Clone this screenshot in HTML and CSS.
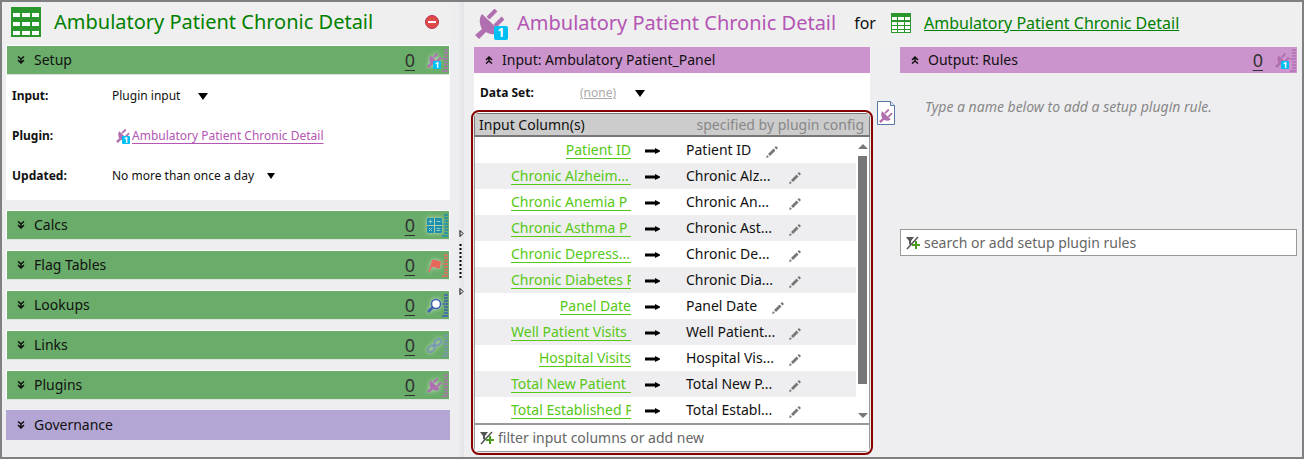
FILE: index.html
```html
<!doctype html>
<html lang="en">
<head>
<meta charset="utf-8">
<title>Ambulatory Patient Chronic Detail</title>
<link rel="stylesheet" href="styles.css">
</head>
<body>
<svg class="defs" aria-hidden="true">
    <symbol id="i-table" viewBox="0 0 30 30">
        <path fill="#2b962b" d="M0 0h30v30H0z"/>
        <path fill="#fff" d="M2 6h7v4H2zM11 6h8v4h-8zM21 6h7v4h-7zM2 15h7v4H2zM11 15h8v4h-8zM21 15h7v4h-7zM2 24h7v4H2zM11 24h8v4h-8zM21 24h7v4h-7z"/>
    </symbol>
    <symbol id="i-table-sm" viewBox="0 0 20 20">
        <path fill="#2b962b" d="M0 0h20v20H0z"/>
        <path fill="#fff" d="M1 4h5v3H1zM7 4h6v3H7zM14 4h5v3h-5zM1 9h5v3H1zM7 9h6v3H7zM14 9h5v3h-5zM1 13h5v3H1zM7 13h6v3H7zM14 13h5v3h-5zM1 17h5v2H1zM7 17h6v2H7zM14 17h5v2h-5z"/>
    </symbol>
    <symbol id="i-plug" viewBox="0 0 30 30">
        <path fill="#b070b0" d="M7 5 25 22C22 26 15 26 11 23L4 30 0 26 7 20C4 15 4 9 7 5z"/>
        <path stroke="#b070b0" stroke-width="4" d="M13 9 21 1M20 17l8-8"/>
    </symbol>
    <symbol id="i-ruler" viewBox="0 0 6 23">
        <path stroke="currentColor" stroke-width="1.500" d="M2 1h4M2 4h4M2 7h4M0 10h6M2 13h4M2 16h4M2 19h4M0 22h6"/>
    </symbol>
    <symbol id="i-down" viewBox="0 0 8 8">
        <path fill="none" stroke="#111" stroke-width="1.500" d="M1 .5 4 3 7 .5M1 4l3 3 3-3M4 2v4"/>
    </symbol>
    <symbol id="i-up" viewBox="0 0 8 8">
        <path fill="none" stroke="#111" stroke-width="1.500" d="M1 7.500 4 5 7 7.500M1 4l3-3 3 3M4 2v4"/>
    </symbol>
    <symbol id="i-arrow" viewBox="0 0 15 7">
        <path d="M0 2.500h10V1l5 2.500v1L10 7V5.500H0z"/>
    </symbol>
    <symbol id="i-pencil" viewBox="0 0 12 12">
        <path fill="#777" d="M0 12 1 9l2 2zM2 8l5.500-5.500 2 2L4 10zM8.500 1.500 10 0l2 2-1.500 1.500z"/>
    </symbol>
    <symbol id="i-filter" viewBox="0 0 14 14">
        <path fill="#555" d="M0 1h8L5 5v4L3 8V5z"/>
        <path stroke="#555" stroke-width="1.500" d="M1 13 12 1"/>
        <path stroke="#4a9e1e" stroke-width="2" d="M10 5v8M6 9h8"/>
    </symbol>
</svg>
<div class="app">
    <aside class="side">
        <header class="side-head">
            <svg class="icon-lg"><use href="#i-table"/></svg>
            <h1>Ambulatory Patient Chronic Detail</h1>
            <button class="remove" aria-label="Remove">
                <svg viewBox="0 0 14 14"><circle cx="7" cy="7" r="6.500" fill="#e04a4a" stroke="#b8304a"/><path fill="#fff" d="M3 6h8v2H3z"/></svg>
            </button>
        </header>
        <div class="sections">
            <section class="setup">
                <div class="bar">
                    <svg class="chev"><use href="#i-down"/></svg>
                    <h2>Setup</h2>
                    <a class="count" href="#">0</a>
                    <span class="kind"><svg class="plug"><use href="#i-plug"/></svg><b class="badge">1</b><svg class="ruler violet"><use href="#i-ruler"/></svg></span>
                </div>
                <dl class="props">
                    <dt>Input:</dt>
                    <dd><button class="drop wide">Plugin input<i></i></button></dd>
                    <dt>Plugin:</dt>
                    <dd class="plugin"><span class="tag"><svg class="plug"><use href="#i-plug"/></svg><b class="badge">1</b></span><a href="#">Ambulatory Patient Chronic Detail</a></dd>
                    <dt>Updated:</dt>
                    <dd><button class="drop small">No more than once a day<i></i></button></dd>
                </dl>
            </section>
            <div class="bar">
                <svg class="chev"><use href="#i-down"/></svg>
                <h2>Calcs</h2>
                <a class="count" href="#">0</a>
                <span class="kind"><svg class="glyph" viewBox="0 0 15 15"><path fill="#1d8fae" d="M1 0h6v7H0V1zM8 0h6l1 1v6H8zM0 8h7v7H1l-1-1zM8 8h7v6l-1 1H8z"/><path stroke="#8fd0c0" d="M3.500 1.500v4M1.500 3.500h4M9.500 3.500h4M2 10l3 3M5 10l-3 3M9.500 10.500h4M9.500 12.500h4"/></svg><svg class="ruler teal"><use href="#i-ruler"/></svg></span>
            </div>
            <div class="bar">
                <svg class="chev"><use href="#i-down"/></svg>
                <h2>Flag Tables</h2>
                <a class="count" href="#">0</a>
                <span class="kind"><svg class="glyph" viewBox="0 0 15 15"><path fill="#e8695c" d="M5 3c3-3 5 1 9 0l-1 7c-4 2-5-3-9 0z"/><path stroke="#e8695c" stroke-width="1.500" d="M6 2 2 14"/></svg><svg class="ruler red"><use href="#i-ruler"/></svg></span>
            </div>
            <div class="bar">
                <svg class="chev"><use href="#i-down"/></svg>
                <h2>Lookups</h2>
                <a class="count" href="#">0</a>
                <span class="kind"><svg class="glyph" viewBox="0 0 15 15"><path stroke="#3f62b4" stroke-width="2.500" d="M6 9l-5 5"/><circle cx="9" cy="6" r="4.500" fill="#fff" stroke="#3f62b4" stroke-width="1.500"/></svg><svg class="ruler blue"><use href="#i-ruler"/></svg></span>
            </div>
            <div class="bar">
                <svg class="chev"><use href="#i-down"/></svg>
                <h2>Links</h2>
                <a class="count" href="#">0</a>
                <span class="kind"><svg class="glyph" viewBox="0 0 15 15"><g fill="none" stroke="#7795b5" stroke-width="1.500" transform="rotate(-45 7.500 7.500)"><rect x="-1" y="5" width="8" height="5" rx="2.500"/><rect x="8" y="5" width="8" height="5" rx="2.500"/><path d="M5 7.500h5"/></g></svg><svg class="ruler steel"><use href="#i-ruler"/></svg></span>
            </div>
            <div class="bar">
                <svg class="chev"><use href="#i-down"/></svg>
                <h2>Plugins</h2>
                <a class="count" href="#">0</a>
                <span class="kind"><svg class="plug"><use href="#i-plug"/></svg><svg class="ruler violet"><use href="#i-ruler"/></svg></span>
            </div>
            <div class="bar governance">
                <svg class="chev"><use href="#i-down"/></svg>
                <h2>Governance</h2>
            </div>
        </div>
    </aside>

    <div class="splitter">
        <svg viewBox="0 0 5 66"><path fill="#fff" stroke="#000" d="M1 .5 4 3.500 1 6.500zM1 58.500l3 3-3 3z"/><path stroke="#000" stroke-width="2" stroke-dasharray="2" d="M1.500 14v36"/></svg>
    </div>

    <main class="main">
        <header class="main-head">
            <span class="logo"><svg class="plug"><use href="#i-plug"/></svg><b class="badge">1</b></span>
            <h1>Ambulatory Patient Chronic Detail</h1>
            <span class="for">for</span>
            <svg class="icon-md"><use href="#i-table-sm"/></svg>
            <a href="#">Ambulatory Patient Chronic Detail</a>
        </header>
        <div class="cols">
            <section class="input">
                <div class="bar pink">
                    <svg class="chev"><use href="#i-up"/></svg>
                    <h2>Input: Ambulatory Patient_Panel</h2>
                </div>
                <div class="dataset">
                    <b>Data Set:</b>
                    <a href="#">(none)</a>
                    <button class="drop" aria-label="Choose data set"><i></i></button>
                </div>
                <div class="columns">
                    <div class="columns-head"><h3>Input Column(s)</h3><span>specified by plugin config</span></div>
                    <div class="list">
                        <table>
                            <tr><td><a href="#">Patient ID</a></td><td><svg class="arrow"><use href="#i-arrow"/></svg></td><td><span>Patient ID</span><svg class="pencil"><use href="#i-pencil"/></svg></td></tr>
                            <tr class="long"><td><a href="#">Chronic Alzheim...</a></td><td><svg class="arrow"><use href="#i-arrow"/></svg></td><td><span>Chronic Alz...</span><svg class="pencil"><use href="#i-pencil"/></svg></td></tr>
                            <tr class="long"><td><a href="#">Chronic Anemia P</a></td><td><svg class="arrow"><use href="#i-arrow"/></svg></td><td><span>Chronic An...</span><svg class="pencil"><use href="#i-pencil"/></svg></td></tr>
                            <tr class="long"><td><a href="#">Chronic Asthma P</a></td><td><svg class="arrow"><use href="#i-arrow"/></svg></td><td><span>Chronic Ast...</span><svg class="pencil"><use href="#i-pencil"/></svg></td></tr>
                            <tr class="long"><td><a href="#">Chronic Depress...</a></td><td><svg class="arrow"><use href="#i-arrow"/></svg></td><td><span>Chronic De...</span><svg class="pencil"><use href="#i-pencil"/></svg></td></tr>
                            <tr class="long"><td><a href="#">Chronic Diabetes P</a></td><td><svg class="arrow"><use href="#i-arrow"/></svg></td><td><span>Chronic Dia...</span><svg class="pencil"><use href="#i-pencil"/></svg></td></tr>
                            <tr><td><a href="#">Panel Date</a></td><td><svg class="arrow"><use href="#i-arrow"/></svg></td><td><span>Panel Date</span><svg class="pencil"><use href="#i-pencil"/></svg></td></tr>
                            <tr class="long"><td><a href="#">Well Patient Visits</a></td><td><svg class="arrow"><use href="#i-arrow"/></svg></td><td><span>Well Patient...</span><svg class="pencil"><use href="#i-pencil"/></svg></td></tr>
                            <tr class="mid"><td><a href="#">Hospital Visits</a></td><td><svg class="arrow"><use href="#i-arrow"/></svg></td><td><span>Hospital Vis...</span><svg class="pencil"><use href="#i-pencil"/></svg></td></tr>
                            <tr class="long"><td><a href="#">Total New Patient</a></td><td><svg class="arrow"><use href="#i-arrow"/></svg></td><td><span>Total New P...</span><svg class="pencil"><use href="#i-pencil"/></svg></td></tr>
                            <tr class="long"><td><a href="#">Total Established P</a></td><td><svg class="arrow"><use href="#i-arrow"/></svg></td><td><span>Total Establ...</span><svg class="pencil"><use href="#i-pencil"/></svg></td></tr>
                        </table>
                        <div class="scroll"><i class="up"></i><span></span><i></i></div>
                    </div>
                    <label class="search"><svg><use href="#i-filter"/></svg><input type="text" aria-label="Filter input columns" placeholder="filter input columns or add new"></label>
                </div>
            </section>
            <div class="rail">
                <svg viewBox="0 0 18 24"><path fill="#fff" stroke="#5577aa" d="M.5.5h13l4 4v19H.5z"/><path fill="#dde6f5" stroke="#5577aa" d="M13.500.5v4h4"/><use href="#i-plug" x="2" y="8" width="14" height="14"/></svg>
            </div>
            <section class="output">
                <div class="bar pink">
                    <svg class="chev"><use href="#i-up"/></svg>
                    <h2>Output: Rules</h2>
                    <a class="count" href="#">0</a>
                    <span class="kind"><svg class="plug"><use href="#i-plug"/></svg><b class="badge">1</b><svg class="ruler violet"><use href="#i-ruler"/></svg></span>
                </div>
                <p class="hint">Type a name below to add a setup plugin rule.</p>
                <label class="search"><svg><use href="#i-filter"/></svg><input type="text" aria-label="Search setup plugin rules" placeholder="search or add setup plugin rules"></label>
            </section>
        </div>
    </main>
</div>
</body>
</html>
```
FILE: styles.css
```css
* {
    box-sizing: border-box;
}
body {
    margin: 0;
    font: 14px/20px "Noto Sans", "Open Sans", sans-serif;
    color: #111;
}
h1, h2, h3, p, dl, dd {
    margin: 0;
    font-weight: normal;
}
button {
    border: 0;
    padding: 0;
    background: none;
    font: inherit;
    color: inherit;
}
svg {
    display: block;
    flex: none;
}
.defs {
    position: absolute;
    width: 0;
    height: 0;
}
.app {
    display: flex;
    min-height: 100vh;
    border: 2px solid #808080;
    background: #eeeef0;
}

/* headers */
.side-head, .main-head {
    display: flex;
    align-items: center;
    background: #efefef;
}
.side-head {
    height: 43px;
    padding: 0 13px 4px 9px;
}
.side-head h1 {
    flex: 1;
    margin-left: 13px;
    font-size: 20px;
    line-height: 30px;
    color: #008000;
}
.icon-lg {
    width: 30px;
    height: 30px;
}
.icon-md {
    width: 20px;
    height: 20px;
    margin: 0 13px 0 15px;
}
.remove svg {
    width: 14px;
    height: 14px;
}
.main-head {
    height: 45px;
    padding: 0 10px 4px 11px;
}
.main-head h1 {
    margin: 0 18px 0 9px;
    font-size: 20px;
    line-height: 30px;
    color: #b455b4;
}
.main-head a {
    font-size: 16px;
    color: #008000;
}
.for {
    font-size: 16px;
}
.logo {
    position: relative;
    width: 33px;
    height: 31px;
    margin-top: 4px;
}
.logo .plug {
    width: 30px;
    height: 30px;
}
.badge {
    position: absolute;
    background: #00bff3;
    border-radius: 2px;
    color: #fff;
    text-align: center;
}
.logo .badge {
    right: 0;
    bottom: 0;
    width: 14px;
    height: 14px;
    font-size: 12px;
    line-height: 14px;
}

/* left side */
.side {
    flex: 0 1 450px;
}
.sections {
    padding: 0 2px 0 4px;
}
.bar {
    display: flex;
    align-items: center;
    height: 30px;
    border: 1px solid #fff;
    border-bottom-color: #dfe3df;
    background: #6aad6a;
    margin-bottom: 10px;
    padding-left: 10px;
}
.bar h2 {
    flex: 1;
    margin-left: 9px;
    font-size: 14px;
    line-height: 20px;
}
.chev {
    width: 8px;
    height: 8px;
}
.count {
    font-size: 18px;
    text-underline-offset: 3px;
    color: #333;
}
.setup {
    background: #fff;
    margin-bottom: 10px;
}
.setup .bar {
    margin: 0;
}
.governance {
    border: 0;
    padding-left: 11px;
    background: #b3a6d5;
}
.kind {
    display: flex;
    align-items: center;
    position: relative;
    width: 21px;
    margin: 0 1px 0 12px;
}
.kind .plug, .glyph {
    width: 15px;
    height: 15px;
    filter: drop-shadow(0 0 2px #cde0cd);
}
.kind .badge, .tag .badge {
    width: 8px;
    height: 8px;
    font-size: 8px;
    line-height: 8px;
    border-radius: 1px;
}
.kind .badge {
    left: 6px;
    bottom: 3px;
}
.ruler {
    width: 6px;
    height: 23px;
}
.violet { color: #b070b0; }
.teal { color: #1d8fae; }
.red { color: #e8695c; }
.blue { color: #3f62b4; }
.steel { color: #7795b5; }

.props {
    display: grid;
    grid-template-columns: 100px 1fr;
    grid-auto-rows: 40px;
    align-items: center;
    height: 125px;
    padding: 1px 0 0 6px;
    font-size: 12px;
}
.props dt {
    font-weight: bold;
}
.drop {
    display: flex;
    align-items: center;
}
.drop i {
    border: 5px solid transparent;
    border-top: 7px solid #000;
    border-bottom: 0;
}
.wide i {
    margin-left: 18px;
}
.small i {
    margin-left: 13px;
    border-width: 6px 4px 0;
}
.plugin {
    display: flex;
    align-items: center;
    padding-left: 4px;
}
.plugin a {
    color: #b455b4;
    text-underline-offset: 3px;
}
.tag {
    position: relative;
    width: 16px;
    height: 15px;
}
.tag .plug {
    width: 14px;
    height: 14px;
}
.tag .badge {
    right: 2px;
    bottom: 0;
}

.splitter {
    flex: none;
    width: 12px;
    padding: 228px 0 0 7px;
    background: linear-gradient(to right, #eeeef0 5px, #e4e4e8);
}
.splitter svg {
    width: 5px;
    height: 66px;
}

/* right side */
.main {
    flex: 1;
    min-width: 0;
}
.cols {
    display: grid;
    grid-template-columns: 396px 30px 1fr;
    padding: 0 5px 4px 10px;
}
.pink {
    height: 26px;
    margin: 0;
    border: 0;
    padding-left: 11px;
    background: #cc94cd;
}
.pink .plug {
    filter: none;
}
.dataset {
    display: flex;
    align-items: center;
    height: 40px;
    padding-left: 6px;
    background: #fff;
}
.dataset b {
    width: 100px;
    font-size: 12px;
}
.dataset a {
    width: 55px;
    font-size: 12px;
    color: #aaa;
}
.columns {
    border-radius: 5px;
    outline: 2px solid #870000;
    outline-offset: 1px;
    overflow: hidden;
    background: #fff;
}
.columns-head {
    display: flex;
    justify-content: space-between;
    height: 24px;
    border: 1px solid #777;
    border-bottom-width: 2px;
    padding: 0 5px 0 4px;
    line-height: 22px;
    background: #ccc;
}
.columns-head h3 {
    font-size: 14px;
}
.columns-head span {
    color: #888;
}
.list {
    display: flex;
    border: 1px solid #999;
    border-width: 0 1px;
}
table {
    flex: 1;
    table-layout: fixed;
    border-collapse: collapse;
}
tr:nth-child(even) {
    background: #eeeef0;
}
td {
    height: 26px;
    padding: 0;
    white-space: nowrap;
}
td:first-child {
    width: 156px;
    padding-left: 36px;
}
td:first-child a {
    display: block;
    width: max-content;
    max-width: 120px;
    height: 18px;
    margin-left: auto;
    border-bottom: 1px solid #55c814;
    overflow: hidden;
    line-height: 18px;
    text-decoration: none;
    color: #55c814;
}
.long td:first-child a {
    width: 120px;
}
td:nth-child(2) {
    width: 55px;
    padding-left: 14px;
}
td span {
    display: inline-block;
}
.long span, .mid span {
    width: 88px;
}
.arrow {
    width: 15px;
    height: 7px;
}
.pencil {
    display: inline-block;
    width: 12px;
    height: 12px;
    margin-left: 15px;
    vertical-align: -3px;
}
.scroll {
    display: flex;
    flex-direction: column;
    align-items: center;
    gap: 7px;
    width: 13px;
    padding: 7px 0 5px;
}
.scroll i {
    border: 5px solid transparent;
    border-top-color: #777;
    border-bottom: 0;
}
.scroll .up {
    border-top: 0;
    border-bottom: 5px solid #777;
}
.scroll span {
    width: 9px;
    height: 228px;
    margin-bottom: auto;
    background: #777779;
}
.search {
    display: flex;
    align-items: center;
    height: 27px;
    border: 1px solid #999;
    padding-left: 5px;
    background: #fff;
}
.columns .search {
    height: 29px;
    border-top-width: 2px;
}
.search svg {
    width: 14px;
    height: 14px;
}
.search input {
    flex: 1;
    min-width: 0;
    border: 0;
    padding: 0 5px 0 4px;
    background: none;
    font: inherit;
}
.search input::placeholder {
    color: #666;
    opacity: 1;
}
.rail {
    padding: 54px 0 0 7px;
}
.rail svg {
    width: 18px;
    height: 24px;
}
.hint {
    padding: 24px 0 112px 25px;
    font-style: italic;
    color: #888;
}
```
